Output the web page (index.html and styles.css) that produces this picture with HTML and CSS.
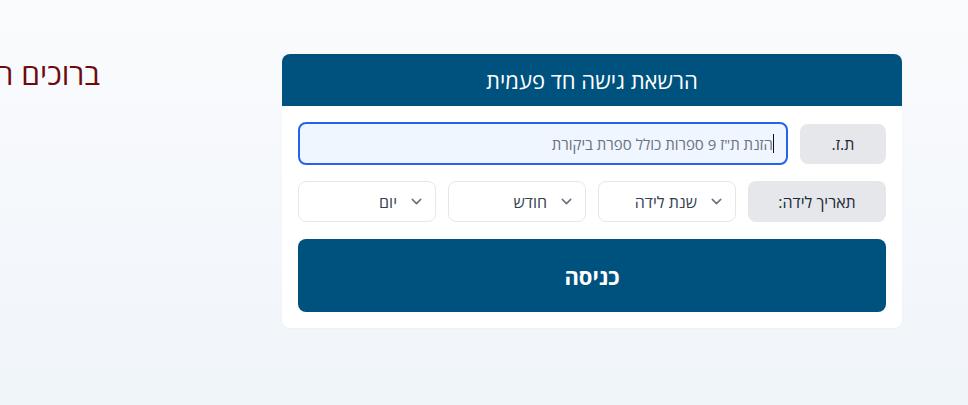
FILE: index.html
```html
<!DOCTYPE html>
<html lang="he" dir="rtl">
<head>
<meta charset="utf-8">
<title>הרשאת גישה חד פעמית</title>
<link rel="stylesheet" href="styles.css">
</head>
<body>
<main class="page">
  <section class="card">
    <header class="card-header">הרשאת גישה חד פעמית</header>
    <div class="card-body">
      <div class="row-id">
        <div class="label">ת.ז.</div>
        <div class="input"><span class="caret"></span><span class="placeholder">הזנת ת"ז 9 ספרות כולל ספרת ביקורת</span></div>
      </div>
      <div class="row-date">
        <div class="label">תאריך לידה:</div>
        <div class="select">
          <svg class="chev" viewBox="0 0 20 20" width="21" height="21"><path d="M6 8l4 4 4-4" fill="none" stroke="#6b7280" stroke-width="1.5" stroke-linecap="round" stroke-linejoin="round"/></svg>
          <span>שנת לידה</span>
        </div>
        <div class="select">
          <svg class="chev" viewBox="0 0 20 20" width="21" height="21"><path d="M6 8l4 4 4-4" fill="none" stroke="#6b7280" stroke-width="1.5" stroke-linecap="round" stroke-linejoin="round"/></svg>
          <span>חודש</span>
        </div>
        <div class="select">
          <svg class="chev" viewBox="0 0 20 20" width="21" height="21"><path d="M6 8l4 4 4-4" fill="none" stroke="#6b7280" stroke-width="1.5" stroke-linecap="round" stroke-linejoin="round"/></svg>
          <span>יום</span>
        </div>
      </div>
      <button class="submit" type="button">כניסה</button>
    </div>
  </section>
  <h1 class="welcome">ברוכים הבאים למערכת</h1>
</main>
</body>
</html>
```

FILE: styles.css
```css
html, body {
  margin: 0;
  height: 100%;
  overflow: hidden;
}
body {
  direction: rtl;
  font-family: "Open Sans", "Liberation Sans", sans-serif;
  background: linear-gradient(to bottom, #fafbfd 0%, #f0f5fa 100%);
  color: #1f2937;
}
.page {
  display: flex;
  align-items: flex-start;
  gap: 182px;
  padding: 54px 66px 0 0;
}
.card {
  flex: 0 0 620px;
  width: 620px;
  background: #fff;
  border-radius: 8px;
  overflow: hidden;
  box-shadow: 0 1px 2px rgba(0,0,0,0.03);
}
.card-header {
  background: #00527e;
  color: #fff;
  height: 52px;
  display: flex;
  align-items: center;
  justify-content: center;
  font-size: 22px;
}
.card-body {
  padding: 16px;
  display: flex;
  flex-direction: column;
}
.row-id {
  display: flex;
  gap: 12px;
  align-items: center;
}
.label {
  background: #e5e7eb;
  border-radius: 8px;
  height: 40px;
  display: flex;
  align-items: center;
  justify-content: center;
  font-size: 16px;
  color: #1f2937;
}
.row-id .label {
  flex: 0 0 86px;
}
.input {
  flex: 1;
  height: 43px;
  box-sizing: border-box;
  border: 2px solid #2563eb;
  border-radius: 8px;
  background: #eff6ff;
  display: flex;
  align-items: center;
  padding-right: 12px;
  font-size: 15px;
}
.caret {
  width: 1px;
  height: 19px;
  background: #111;
}
.placeholder {
  color: #6b7280;
}
.row-date {
  margin-top: 16px;
  display: grid;
  grid-template-columns: repeat(4, 1fr);
  gap: 12px;
  height: 41px;
}
.row-date .label {
  height: 41px;
}
.select {
  box-sizing: border-box;
  border: 1px solid #e5e7eb;
  border-radius: 8px;
  background: #fff;
  display: flex;
  align-items: center;
  gap: 9px;
  padding-right: 8px;
  font-size: 16px;
  color: #374151;
}
.chev {
  flex: none;
}
.submit {
  margin-top: 17px;
  height: 73px;
  border: 0;
  border-radius: 8px;
  background: #00527e;
  color: #fff;
  font-family: inherit;
  font-size: 22px;
  font-weight: 700;
}
.welcome {
  margin: 0;
  font-size: 30px;
  font-weight: 400;
  line-height: 40px;
  color: #6e0a0a;
  white-space: nowrap;
}
```
